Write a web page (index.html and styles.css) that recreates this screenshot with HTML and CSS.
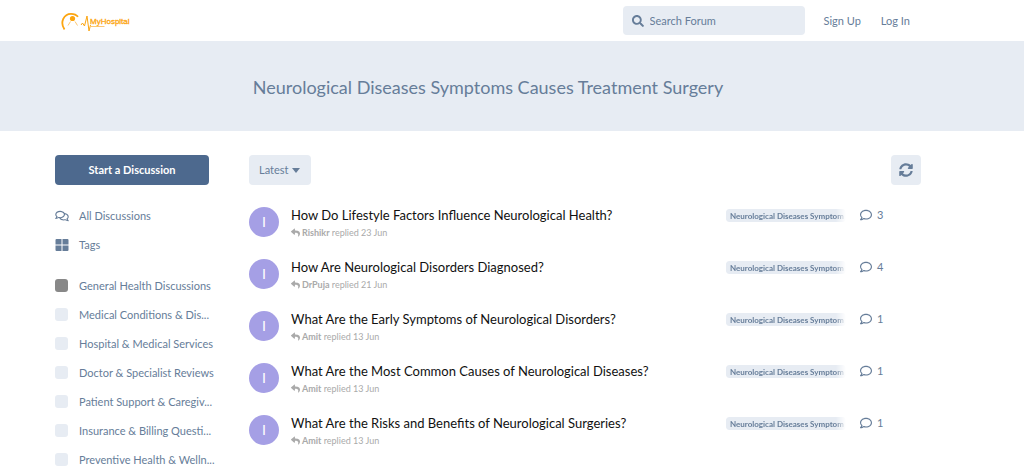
FILE: index.html
```html
<!DOCTYPE html>
<html lang="en">
<head>
  <meta charset="UTF-8" />
  <meta name="viewport" content="width=device-width, initial-scale=1" />
  <title>Neurological Diseases Symptoms Causes Treatment Surgery - MyHospital</title>
  <link rel="stylesheet" href="styles.css">
</head>
<body>
  <!-- Shared icons -->
  <svg class="sprite" aria-hidden="true">
    <symbol id="i-search" viewBox="0 0 512 512"><path d="M505 442.7L405.3 343c-4.5-4.5-10.6-7-17-7H372c27.6-35.3 44-79.7 44-128C416 93.1 322.9 0 208 0S0 93.1 0 208s93.1 208 208 208c48.3 0 92.7-16.4 128-44v16.3c0 6.4 2.5 12.5 7 17l99.7 99.7c9.4 9.4 24.6 9.4 33.9 0l28.3-28.3c9.4-9.4 9.4-24.6.1-34zM208 336c-70.7 0-128-57.2-128-128 0-70.7 57.2-128 128-128 70.7 0 128 57.2 128 128 0 70.7-57.2 128-128 128z"/></symbol>
    <symbol id="i-comment" viewBox="0 0 512 512"><path d="M256 32C114.6 32 0 125.1 0 240c0 47.6 19.9 91.2 52.9 126.3C38 405.7 7 439.1 6.5 439.5c-6.6 7-8.4 17.2-4.6 26S14.4 480 24 480c61.5 0 110-25.7 139.1-46.3C192 442.8 223.2 448 256 448c141.4 0 256-93.1 256-208S397.4 32 256 32zm0 368c-26.7 0-53.1-4.1-78.4-12.1l-22.7-7.2-19.5 13.8c-14.3 10.1-33.9 21.4-57.5 29 7.3-12.1 14.4-25.7 19.9-40.2l10.6-28.1-20.6-21.8C69.7 314.1 48 282.2 48 240c0-88.2 93.3-160 208-160s208 71.8 208 160-93.3 160-208 160z"/></symbol>
    <symbol id="i-comments" viewBox="0 0 576 512"><path d="M532 386.2c27.5-27.1 44-61.1 44-98.2 0-80-76.5-146.1-176.2-157.9C368.3 72.5 294.3 32 208 32 93.1 32 0 103.6 0 192c0 37 16.5 71 44 98.2-15.3 30.7-37.3 54.5-37.7 54.9-6.3 6.7-8.1 16.5-4.4 25 3.6 8.5 12 14 21.2 14 53.5 0 96.7-20.2 125.2-38.8 9.2 2.1 18.7 3.7 28.4 4.9C208.1 407.6 281.8 448 368 448c20.8 0 40.8-2.4 59.8-6.8C456.3 459.7 499.4 480 553 480c9.2 0 17.5-5.5 21.2-14 3.6-8.5 1.9-18.3-4.4-25-.4-.3-22.5-24.1-37.8-54.8zm-392.8-92.3L122.1 305c-14.1 9.1-28.5 16.3-43.1 21.4 2.7-4.7 5.4-9.7 8-14.8l15.5-31.1L77.7 256C64.2 242.6 48 220.7 48 192c0-60.7 73.3-112 160-112s160 51.3 160 112-73.3 112-160 112c-16.5 0-33-1.9-49-5.6l-19.8-4.5zM498.3 352l-24.7 24.4 15.5 31.1c2.6 5.1 5.3 10.1 8 14.8-14.6-5.1-29-12.3-43.1-21.4l-17.1-11.1-19.9 4.6c-16 3.7-32.5 5.6-49 5.6-54 0-102.2-20.1-131.3-49.7C338 339.5 416 272.9 416 192c0-3.4-.4-6.7-.7-10C479.7 196.5 528 238.8 528 288c0 28.7-16.2 50.6-29.7 64z"/></symbol>
    <symbol id="i-tags" viewBox="0 0 13 12"><path d="M1 0h5v5.500H0V1a1 1 0 0 1 1-1zM7 0h5a1 1 0 0 1 1 1v4.500H7zM0 6.500h6V12H1a1 1 0 0 1-1-1zM7 6.500h6V11a1 1 0 0 1-1 1H7z"/></symbol>
    <symbol id="i-reply" viewBox="0 0 512 512"><path d="M8.309 189.836L184.313 37.851C199.719 24.546 224 35.347 224 56.015v80.053c160.629 1.839 288 34.032 288 186.258 0 61.441-39.581 122.309-83.333 154.132-13.653 9.931-33.111-2.533-28.077-18.631 45.344-145.012-21.507-183.510-176.590-185.742V360c0 20.700-24.300 31.453-39.687 18.164l-176.004-152c-11.071-9.562-11.086-26.753 0-36.328z"/></symbol>
    <symbol id="i-sync" viewBox="0 0 512 512"><path d="M370.720 133.280C339.458 104.008 298.888 87.962 255.848 88c-77.458.068-144.328 53.178-162.791 126.850-1.344 5.363-6.122 9.150-11.651 9.150H24.103c-7.498 0-13.194-6.807-11.807-14.176C33.933 94.924 134.813 8 256 8c66.448 0 126.791 26.136 171.315 68.685L463.030 40.970C478.149 25.851 504 36.559 504 57.941V192c0 13.255-10.745 24-24 24H345.941c-21.382 0-32.090-25.851-16.971-40.971l41.750-41.749zM32 296h134.059c21.382 0 32.090 25.851 16.971 40.971l-41.750 41.750c31.262 29.273 71.835 45.319 114.876 45.280 77.418-.070 144.315-53.144 162.787-126.849 1.344-5.363 6.122-9.150 11.651-9.150h57.304c7.498 0 13.194 6.807 11.807 14.176C478.067 417.076 377.187 504 256 504c-66.448 0-126.791-26.136-171.315-68.685L48.970 471.030C33.851 486.149 8 475.441 8 454.059V320c0-13.255 10.745-24 24-24z"/></symbol>
  </svg>

  <header class="header">
    <div class="container header-inner">
      <a class="logo" href="#" aria-label="MyHospital">
        <svg width="74" height="22" viewBox="0 0 74 22">
          <path d="M3.500 18.500C-1.500 11 3 2.800 10 2.800c3.500 0 5.500 1 7 3" fill="none" stroke="#fca510" stroke-width="1.800"/>
          <circle cx="11.500" cy="7.500" r="2.600" fill="#fca510"/>
          <path d="M7 14.500l2.500-4M14 10.500l2.500 4" fill="none" stroke="#fcc873" stroke-width="1"/>
          <path d="M20 14l1.500-2 2 3 2.500-10 2 15 1.500-6" fill="none" stroke="#fca510" stroke-width="1" stroke-linejoin="round"/>
          <path d="M29.500 15.500h14" fill="none" stroke="#fcc873" stroke-width="1"/>
          <text class="logo-text" x="29" y="13">MyHospital</text>
        </svg>
      </a>
      <label class="search">
        <svg class="icon"><use href="#i-search"/></svg>
        <input type="search" placeholder="Search Forum" aria-label="Search Forum">
      </label>
      <nav class="session">
        <a href="#">Sign Up</a>
        <a href="#">Log In</a>
      </nav>
    </div>
  </header>

  <div class="hero">
    <div class="container">
      <h1>Neurological Diseases Symptoms Causes Treatment Surgery</h1>
    </div>
  </div>

  <main class="container page">
    <aside class="sidebar">
      <button class="start-btn" type="button">Start a Discussion</button>
      <ul class="nav-list">
        <li><a href="#"><svg class="icon"><use href="#i-comments"/></svg><span>All Discussions</span></a></li>
        <li><a href="#"><svg class="icon"><use href="#i-tags"/></svg><span>Tags</span></a></li>
      </ul>
      <ul class="nav-list tag-list">
        <li><a href="#"><i class="swatch swatch-dark"></i><span>General Health Discussions</span></a></li>
        <li><a href="#"><i class="swatch"></i><span>Medical Conditions &amp; Dis...</span></a></li>
        <li><a href="#"><i class="swatch"></i><span>Hospital &amp; Medical Services</span></a></li>
        <li><a href="#"><i class="swatch"></i><span>Doctor &amp; Specialist Reviews</span></a></li>
        <li><a href="#"><i class="swatch"></i><span>Patient Support &amp; Caregiv...</span></a></li>
        <li><a href="#"><i class="swatch"></i><span>Insurance &amp; Billing Questi...</span></a></li>
        <li><a href="#"><i class="swatch"></i><span>Preventive Health &amp; Welln...</span></a></li>
      </ul>
    </aside>

    <section class="content">
      <div class="toolbar">
        <div class="sort">
          <select aria-label="Sort discussions">
            <option>Latest</option>
            <option>Top</option>
            <option>Newest</option>
            <option>Oldest</option>
          </select>
        </div>
        <button class="refresh-btn" type="button" aria-label="Refresh"><svg class="icon"><use href="#i-sync"/></svg></button>
      </div>

      <ul class="discussions">
        <li class="discussion">
          <span class="avatar">I</span>
          <div class="summary">
            <h2><a href="#">How Do Lifestyle Factors Influence Neurological Health?</a></h2>
            <p><svg class="icon"><use href="#i-reply"/></svg><b>Rishikr</b> replied 23 Jun</p>
          </div>
          <a class="tag" href="#">Neurological Diseases Symptom</a>
          <span class="count"><svg class="icon"><use href="#i-comment"/></svg>3</span>
        </li>
        <li class="discussion">
          <span class="avatar">I</span>
          <div class="summary">
            <h2><a href="#">How Are Neurological Disorders Diagnosed?</a></h2>
            <p><svg class="icon"><use href="#i-reply"/></svg><b>DrPuja</b> replied 21 Jun</p>
          </div>
          <a class="tag" href="#">Neurological Diseases Symptom</a>
          <span class="count"><svg class="icon"><use href="#i-comment"/></svg>4</span>
        </li>
        <li class="discussion">
          <span class="avatar">I</span>
          <div class="summary">
            <h2><a href="#">What Are the Early Symptoms of Neurological Disorders?</a></h2>
            <p><svg class="icon"><use href="#i-reply"/></svg><b>Amit</b> replied 13 Jun</p>
          </div>
          <a class="tag" href="#">Neurological Diseases Symptom</a>
          <span class="count"><svg class="icon"><use href="#i-comment"/></svg>1</span>
        </li>
        <li class="discussion">
          <span class="avatar">I</span>
          <div class="summary">
            <h2><a href="#">What Are the Most Common Causes of Neurological Diseases?</a></h2>
            <p><svg class="icon"><use href="#i-reply"/></svg><b>Amit</b> replied 13 Jun</p>
          </div>
          <a class="tag" href="#">Neurological Diseases Symptom</a>
          <span class="count"><svg class="icon"><use href="#i-comment"/></svg>1</span>
        </li>
        <li class="discussion">
          <span class="avatar">I</span>
          <div class="summary">
            <h2><a href="#">What Are the Risks and Benefits of Neurological Surgeries?</a></h2>
            <p><svg class="icon"><use href="#i-reply"/></svg><b>Amit</b> replied 13 Jun</p>
          </div>
          <a class="tag" href="#">Neurological Diseases Symptom</a>
          <span class="count"><svg class="icon"><use href="#i-comment"/></svg>1</span>
        </li>
      </ul>
    </section>
  </main>
</body>
</html>
```

FILE: styles.css
```css
* {
  box-sizing: border-box;
}

body {
  margin: 0;
  font-family: Lato, "Open Sans", sans-serif;
  font-size: 11px;
  line-height: 16px;
  color: #667d99;
  background: #fff;
}

h1, h2, p, ul {
  margin: 0;
  padding: 0;
  font-weight: 400;
}

ul {
  list-style: none;
}

a {
  color: inherit;
  text-decoration: none;
}

button, input, select {
  font: inherit;
  color: inherit;
  border: 0;
  border-radius: 4px;
}

.sprite {
  display: none;
}

.icon {
  width: 12px;
  height: 12px;
  fill: currentColor;
  flex: none;
}

.container {
  padding: 0 103px 0 55px;
}

/* Header */
.header {
  border-bottom: 1px solid #e7ecf3;
}

.header-inner {
  display: flex;
  align-items: center;
  height: 41px;
}

.logo {
  display: flex;
  margin: 3px auto 0 6px;
}

.logo-text {
  font: 8px "Liberation Sans", Arial, sans-serif;
  fill: #fca510;
  stroke: #fca510;
  stroke-width: .3;
}

.search {
  display: flex;
  align-items: center;
  gap: 6px;
  width: 182px;
  height: 29px;
  padding: 0 9px;
  border-radius: 4px;
  background: #e7ecf3;
}

.search input {
  flex: 1;
  min-width: 0;
  padding: 0;
  background: none;
  outline: 0;
}

.search input::placeholder {
  color: #667d99;
}

.session {
  display: flex;
  gap: 20px;
  padding: 0 11px 0 19px;
}

/* Hero */
.hero {
  padding: 33px 0 32px;
  background: #e7ecf3;
}

.hero h1 {
  text-align: center;
  font-size: 18px;
  line-height: 24px;
}

/* Page */
.page {
  display: flex;
  gap: 40px;
  padding-top: 24px;
}

.sidebar {
  flex: none;
  width: 154px;
}

.start-btn {
  width: 100%;
  height: 30px;
  background: #4d698e;
  color: #fff;
  font-weight: 700;
}

.nav-list {
  margin-top: 16px;
}

.nav-list a {
  display: flex;
  align-items: center;
  gap: 10px;
  height: 29px;
  white-space: nowrap;
}

.nav-list .icon {
  width: 14px;
}

.tag-list {
  margin-top: 12px;
}

.swatch {
  flex: none;
  width: 13px;
  height: 13px;
  margin-right: 1px;
  border-radius: 3px;
  background: #e7ecf3;
}

.swatch-dark {
  background: #888;
}

.content {
  flex: 1;
  min-width: 0;
}

.toolbar {
  display: flex;
  justify-content: space-between;
}

.sort {
  position: relative;
}

.sort select {
  appearance: none;
  width: 62px;
  height: 30px;
  padding: 0 10px;
  background: #e7ecf3;
}

.sort::after {
  content: "";
  position: absolute;
  top: 13px;
  right: 11px;
  border: 4px solid transparent;
  border-top: 5px solid #667d99;
  border-bottom: 0;
  pointer-events: none;
}

.refresh-btn {
  display: flex;
  align-items: center;
  justify-content: center;
  width: 30px;
  height: 30px;
  padding: 0;
  background: #e7ecf3;
}

.refresh-btn .icon {
  width: 14px;
  height: 14px;
}

/* Discussion list */
.discussions {
  margin-top: 11px;
}

.discussion {
  display: flex;
  align-items: flex-start;
  height: 52px;
  padding-top: 11px;
}

.avatar {
  flex: none;
  width: 30px;
  height: 30px;
  border-radius: 50%;
  background: #a59fe5;
  color: #fff;
  font-size: 14px;
  line-height: 30px;
  text-align: center;
}

.summary {
  flex: 1;
  min-width: 0;
  margin-left: 12px;
}

.summary h2 {
  font-size: 13px;
  line-height: 16px;
  color: #111;
}

.summary p {
  margin-top: 4px;
  font-size: 9px;
  line-height: 12px;
  color: #aaa;
}

.summary .icon {
  width: 9px;
  height: 9px;
  margin-right: 2px;
  vertical-align: -1px;
}

/* long tag names fade out on the right */
.tag {
  width: 120px;
  height: 13px;
  margin-top: 2px;
  padding-left: 4px;
  border-radius: 3px;
  background: #e7ecf3;
  font-size: 8px;
  font-weight: 700;
  line-height: 14px;
  white-space: nowrap;
  mask-image: linear-gradient(to right, #000 110px, transparent);
}

.count {
  display: flex;
  align-items: center;
  gap: 5px;
  width: 61px;
  margin-left: 14px;
}
```
